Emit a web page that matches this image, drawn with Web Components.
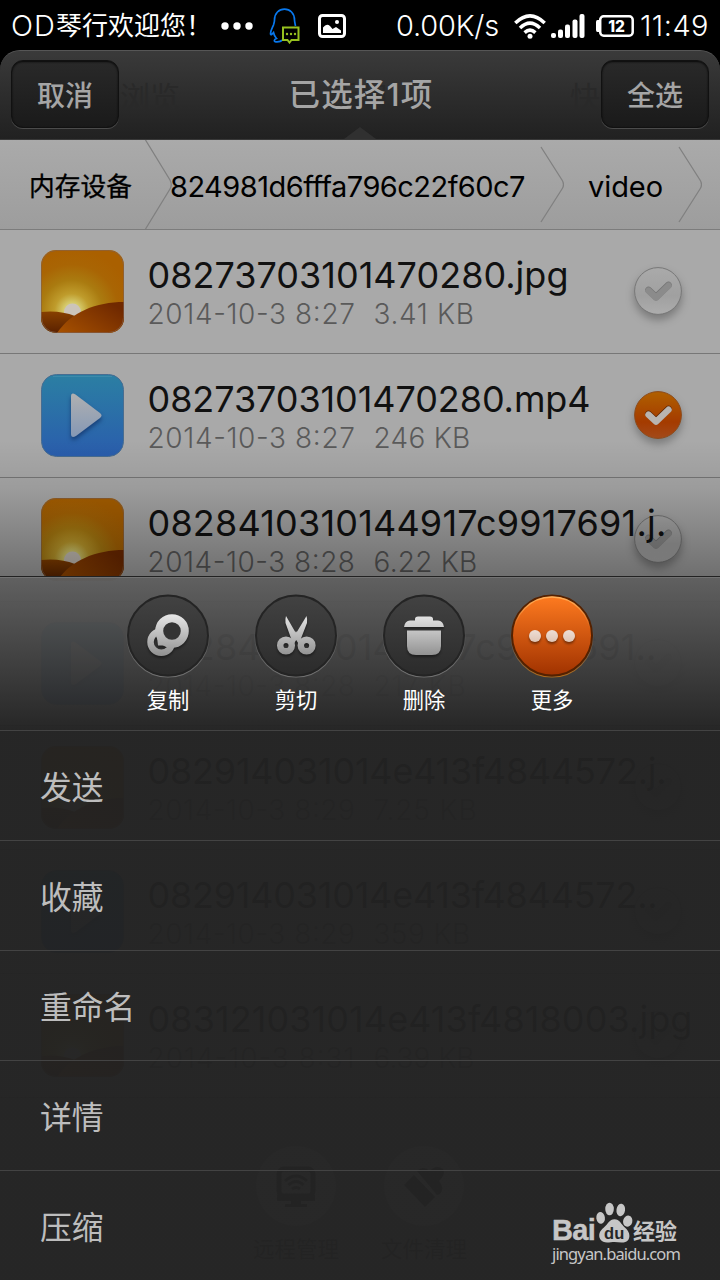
<!DOCTYPE html>
<html lang="zh-CN">
<head>
<meta charset="utf-8">
<title>文件管理</title>
<style>
   html, body { margin: 0; background: #000; }
   body {
      width: 720px;
      height: 1280px;
      overflow: hidden;
      font-family: Inter, "Noto Sans CJK SC", sans-serif;
   }
</style>
</head>
<body>
<file-manager></file-manager>

<script>
const define = (name, html, setup) => {
   const tmpl = document.createElement("template");
   tmpl.innerHTML = html.trim();
   customElements.define(name, class extends HTMLElement {
      constructor() {
         super();
         this.attachShadow({ mode: "open" });
      }
      connectedCallback() {
         if (this.shadowRoot.childNodes.length) return;
         this.shadowRoot.appendChild(tmpl.content.cloneNode(true));
         if (setup) setup(this, this.shadowRoot);
      }
   });
};

// spreads its text to the given width with letter-spacing
define("fit-text", `
   <style>
      :host { display: inline-block; white-space: nowrap; }
   </style>
   <span><slot></slot></span>
`, (el, root) => {
   const width = parseFloat(el.getAttribute("width"));
   const natural = root.querySelector("span").getBoundingClientRect().width;
   const count = [...el.textContent].length;
   if (width && natural) el.style.letterSpacing = `${(width - natural) / count}px`;
});

define("status-bar", `
   <style>
      :host {
         display: flex;
         align-items: center;
         box-sizing: border-box;
         height: 50px;
         padding: 2px 11px 0 11px;
         background: #000;
         color: #fff;
         font-size: 29px;
         font-weight: 300;
         line-height: 48px;
         white-space: nowrap;
      }
      .cjk { font-size: 26px; font-weight: 400; }
      svg { flex: none; display: block; }
      .push { margin-left: auto; }
   </style>
   <fit-text width="45">OD</fit-text><fit-text class="cjk" width="156">琴行欢迎您！</fit-text>
   <svg width="32" height="8" viewBox="0 0 32 8" style="margin-left:9px" fill="#fff">
      <circle cx="4" cy="4" r="3.7"/><circle cx="16" cy="4" r="3.7"/><circle cx="28" cy="4" r="3.7"/>
   </svg>
   <svg width="32" height="36" viewBox="0 0 32 36" style="margin-left:16px" fill="none" stroke-width="1.7">
      <path stroke="#0878ee" d="M26.500 18C26 15.500 25.600 14 25.500 12C25.500 5 21 1.200 15.500 1.200S5.500 5 5.500 12C5.500 14 5 15 4.500 17C3.200 20 1.200 23 1.500 26C2 27.500 3.200 26 4.500 24.500C5 27 6 29 7.500 30.500C5 31.500 4.500 33.500 7 33.800C10 34 12 33.500 13 32"/>
      <path stroke="#97c11f" stroke-width="2" d="M14 19.500h15.500v12.500h-7l-2 2.500-2-2.500h-4.500z"/>
      <g fill="#97c11f"><circle cx="18" cy="26" r="1.200"/><circle cx="22" cy="26" r="1.200"/><circle cx="26" cy="26" r="1.200"/></g>
   </svg>
   <svg width="28" height="24" viewBox="0 0 28 24" style="margin-left:17px">
      <rect x="1.500" y="1.500" width="25" height="21" rx="3" fill="none" stroke="#fff" stroke-width="3"/>
      <path fill="#fff" d="M5 19v-5.500q3.500-4.500 7-1.500l2.500 3 3.500-2 5 3.500v2.500z"/><circle cx="19" cy="8" r="2" fill="#fff"/>
   </svg>
   <fit-text class="push" width="103">0.00K/s</fit-text>
   <svg width="32" height="25" viewBox="0 0 32 25" style="margin-left:15px" fill="none" stroke="#fff" stroke-width="3.500">
      <path d="M1.300 9Q16-5.200 30.700 9M6 14Q16 4.200 26 14M10.600 18.600Q16 13.600 21.400 18.600"/><circle cx="16" cy="22.300" r="2.500" fill="#fff" stroke="none"/>
   </svg>
   <svg width="34" height="24" viewBox="0 0 34 24" style="margin-left:5px" fill="#fff">
      <rect x="0" y="19" width="5" height="5" rx="2"/><rect x="7" y="15.500" width="5" height="8.500" rx="2"/><rect x="14" y="10.500" width="5" height="13.500" rx="2"/><rect x="21.500" y="5.500" width="5" height="18.500" rx="2"/><rect x="28.500" y="0" width="5" height="24" rx="2"/>
   </svg>
   <svg width="38" height="22" viewBox="0 0 38 22" style="margin-left:11px">
      <path fill="#fff" d="M4 5H1.500Q0 5 0 7v8q0 2 1.500 2H4z"/>
      <rect x="4.200" y="1.300" width="32.500" height="19.400" rx="3.500" fill="none" stroke="#fff" stroke-width="2.500"/>
      <text x="20.500" y="16.500" text-anchor="middle" font-size="15.500" font-weight="800" fill="#fff" font-family="Inter">12</text>
   </svg>
   <fit-text width="69" style="margin-left:6px">11:49</fit-text>
`);

define("bar-button", `
   <style>
      :host {
         display: flex;
         align-items: center;
         justify-content: center;
         box-sizing: border-box;
         width: 108px;
         height: 68px;
         border: 1px solid #111;
         border-radius: 12px;
         background: linear-gradient(#292929, #1a1a1a);
         box-shadow: inset 0 1px 2px #090909, 0 1px 0 #4b4b4b;
         color: #a5a5a5;
         font-size: 28px;
         font-weight: 500;
      }
   </style>
   <slot></slot>
`);

define("select-header", `
   <style>
      :host {
         display: flex;
         align-items: flex-start;
         justify-content: space-between;
         position: relative;
         box-sizing: border-box;
         height: 90px;
         padding: 9px 11px 0;
         border-top: 1px solid #565656;
         border-bottom: 1px solid #383838;
         border-radius: 20px 20px 0 0;
         background: linear-gradient(#3a3a3a, #2d2d2d 50%, #212121);
         overflow: hidden;
      }
      .title { color: #a5a5a5; font-size: 31.500px; font-weight: 500; line-height: 69px; }
      bar-button { z-index: 1; }
      /* tabs of the page under the header */
      .tabs {
         position: absolute;
         inset: 0;
         display: grid;
         grid-template-columns: repeat(3, 1fr);
         justify-items: center;
         line-height: 92px;
         color: #292929;
         font-size: 30px;
      }
      .notch {
         position: absolute;
         left: 344px;
         bottom: 0;
         border: 16px solid transparent;
         border-top: 0;
         border-bottom: 12px solid #303030;
      }
      fit-text { position: relative; left: 1px; }
   </style>
   <div class="tabs"><span>分类浏览</span><span>手机</span><span>快盘</span></div>
   <div class="notch"></div>
   <bar-button>取消</bar-button>
   <fit-text class="title" width="145">已选择1项</fit-text>
   <bar-button>全选</bar-button>
`);

define("path-bar", `
   <style>
      :host {
         display: flex;
         box-sizing: border-box;
         height: 90px;
         padding-left: 29px;
         border-bottom: 1px solid #7c7c7c;
         background: linear-gradient(#aaa, #9d9d9d);
         color: #000;
         font-size: 29px;
         line-height: 93px;
         white-space: nowrap;
      }
      svg { flex: none; fill: none; stroke: #808080; stroke-width: 1.3; }
      .root { font-size: 25.7px; font-weight: 400; -webkit-text-stroke: .3px; }
   </style>
   <fit-text class="root" width="103">内存设备</fit-text>
   <svg width="28" height="89" viewBox="0 0 28 89" style="margin-left:12px"><path d="M1.500 0L26 40Q28.500 45 26 49L1.500 89"/></svg>
   <fit-text width="355" style="margin-left:-2px">824981d6fffa796c22f60c7</fit-text>
   <svg width="24" height="89" viewBox="0 0 24 89" style="margin-left:15px"><path d="M1 7L22 40Q25 44.500 22 49L1 82"/></svg>
   <fit-text width="75" style="margin-left:24px">video</fit-text>
   <svg width="24" height="89" viewBox="0 0 24 89" style="margin-left:15px"><path d="M1 7L22 40Q25 44.500 22 49L1 82"/></svg>
`);

const imageIcon = `
   <svg width="83" height="83" viewBox="0 0 83 83">
      <defs>
         <radialGradient id="sun" gradientUnits="userSpaceOnUse" cx="31" cy="61" r="62">
            <stop offset="0" stop-color="#ddd7bf"/><stop offset=".14" stop-color="#d4c868"/><stop offset=".28" stop-color="#bf9c2c"/>
            <stop offset=".5" stop-color="#aa7b10"/><stop offset=".75" stop-color="#a96504"/><stop offset="1" stop-color="#aa6000"/>
         </radialGradient>
         <linearGradient id="near" x1="0" y1="1" x2="1" y2=".3"><stop offset="0" stop-color="#a85200"/><stop offset="1" stop-color="#702900"/></linearGradient>
         <linearGradient id="far" x1="0" y1="0" x2="0" y2="1"><stop offset="0" stop-color="#874000"/><stop offset="1" stop-color="#5a2100"/></linearGradient>
         <clipPath id="tile"><rect width="83" height="83" rx="15"/></clipPath>
      </defs>
      <g clip-path="url(#tile)">
         <rect width="83" height="83" fill="url(#sun)"/>
         <circle cx="31.500" cy="62" r="8.500" fill="#cbc4ba"/>
         <path fill="url(#far)" d="M0 62Q19 60 34 66V83H0z"/>
         <path fill="url(#near)" d="M16 83C30 62 55 52 83 52V83z"/>
      </g>
      <rect x=".5" y=".5" width="82" height="82" rx="15" fill="none" stroke="#806050" stroke-opacity=".6"/>
   </svg>`;

const videoIcon = `
   <svg width="83" height="83" viewBox="0 0 83 83">
      <defs>
         <linearGradient id="sky" x1="0" y1="0" x2="0" y2="1"><stop offset="0" stop-color="#2b7fa3"/><stop offset="1" stop-color="#2a5dad"/></linearGradient>
         <linearGradient id="play" x1="0" y1="0" x2="0" y2="1"><stop offset="0" stop-color="#afb0b1"/><stop offset="1" stop-color="#8598b5"/></linearGradient>
      </defs>
      <rect x=".5" y=".5" width="82" height="82" rx="15" fill="url(#sky)" stroke="#486d91"/>
      <path d="M12 2.500H71" stroke="#4a91b0" stroke-opacity=".6"/>
      <path style="filter:drop-shadow(0 3px 2px #173f78)" fill="url(#play)" d="M30 22.500Q30 18 34.500 20.500L59 39Q62 41.500 59 44L35 62Q30 64.500 30 60z"/>
   </svg>`;

const checkMark = on => `
   <svg width="48" height="48" viewBox="0 0 48 48">
      <defs>
         <linearGradient id="disc" x1="0" y1="0" x2="0" y2="1">
            ${on ? '<stop offset="0" stop-color="#b06000"/><stop offset=".65" stop-color="#a43b00"/><stop offset="1" stop-color="#a34a1a"/>'
                 : '<stop offset="0" stop-color="#aaa"/><stop offset=".6" stop-color="#a0a0a0"/><stop offset="1" stop-color="#adadad"/>'}
         </linearGradient>
      </defs>
      <circle cx="24" cy="24" r="23.400" fill="url(#disc)" stroke="${on ? "#8c4a1a" : "#777"}"/>
      <path d="M14.500 23L22 30L34.500 18" fill="none" stroke="${on ? "#5c2500" : "#747474"}" stroke-width="6.600" stroke-linecap="round" stroke-linejoin="round"/>
      <path d="M14.500 23.700L22 30.700L34.500 18.700" fill="none" stroke="${on ? "#b9b4b0" : "#8b8b8b"}" stroke-width="6.400" stroke-linecap="round" stroke-linejoin="round"/>
   </svg>`;

define("file-row", `
   <style>
      :host {
         display: flex;
         align-items: center;
         box-sizing: border-box;
         height: 124px;
         padding: 0 38px 0 41px;
         border-bottom: 1px solid #777;
         background: #a9a9a9;
      }
      svg { display: block; overflow: visible; }
      .info {
         display: grid;
         grid-template-columns: 226px 1fr;
         row-gap: 4px;
         flex: 1;
         min-width: 0;
         margin-left: 23.500px;
         position: relative;
         z-index: 1;
         white-space: nowrap;
      }
      .name { grid-column: 1 / 3; height: 40px; color: #111; font-size: 36px; line-height: 40px; }
      .meta { height: 30px; color: #5a5a5a; font-size: 28px; font-weight: 300; line-height: 30px; font-feature-settings: "case"; }
      .check { margin-top: -2px; filter: drop-shadow(0 5px 4px rgba(0, 0, 0, .28)); }
   </style>
   <div class="icon"></div>
   <div class="info">
      <div class="name"></div>
      <div class="meta date"></div>
      <div class="meta size"></div>
   </div>
   <div class="check"></div>
`, (el, root) => {
   const fit = (text, width) => `<fit-text width="${width}">${text}</fit-text>`;
   root.querySelector(".icon").innerHTML = el.getAttribute("kind") == "video" ? videoIcon : imageIcon;
   root.querySelector(".name").innerHTML = fit(el.getAttribute("name"), el.getAttribute("name-width"));
   root.querySelector(".date").innerHTML = fit(el.getAttribute("date"), 208);
   root.querySelector(".size").innerHTML = fit(el.getAttribute("size"), el.getAttribute("size-width"));
   root.querySelector(".check").innerHTML = checkMark(el.hasAttribute("checked"));
});

define("bottom-tools", `
   <style>
      :host {
         display: flex;
         justify-content: center;
         gap: 42px;
         height: 182px;
         padding-top: 47px;
         box-sizing: border-box;
         background: #a5a5a5;
         color: #444;
         font-size: 21.500px;
         line-height: 32px;
      }
      div { display: flex; flex-direction: column; align-items: center; width: 86px; gap: 6px; white-space: nowrap; }
      svg { flex: none; }
   </style>
   <div>
      <svg width="82" height="82" viewBox="0 0 82 82">
         <circle cx="41" cy="41" r="40" fill="#ddd"/>
         <rect x="24" y="24" width="34" height="27" rx="5" fill="none" stroke="#444" stroke-width="5"/>
         <path d="M22 50h38v6H22zM36 56h10v4H36zM30 59h22v3H30z" fill="#444"/>
         <path d="M30 36Q41 26 52 36M33.500 40Q41 33 48.500 40M37 44Q41 41 45 44" fill="none" stroke="#444" stroke-width="3"/>
      </svg>
      <span>远程管理</span>
   </div>
   <div>
      <svg width="82" height="82" viewBox="0 0 82 82">
         <circle cx="41" cy="41" r="40" fill="#ddd"/>
         <path fill="#444" d="M21 40L31 30L52 52L42 62zM34 26Q40 20 47 26Q53 19 60 24Q63 29 56 36Q62 43 57 49L54 50z"/>
      </svg>
      <span>文件清理</span>
   </div>
`);

const toolIcons = {
   copy: `
      <circle cx="34.300" cy="48" r="10.800" fill="none" stroke="url(#metal)" stroke-width="6.500"/>
      <path fill="url(#metal)" d="M30 43L36 38L50 50L42 54L40 51.500H31z"/>
      <circle cx="45" cy="37" r="12.800" fill="#343434" stroke="url(#metal)" stroke-width="8"/>`,
   cut: `
      <path fill="url(#metal)" d="M31 22L42 41L37 47L30.500 29Q30 25 31 22zM51.500 22L40 41L45 47L52 29Q52.500 25 51.500 22z"/>
      <g fill="none" stroke="url(#metal)" stroke-width="6.500"><circle cx="31" cy="51.500" r="5.800"/><circle cx="51.600" cy="51.500" r="5.800"/></g>
      <path fill="url(#metal)" d="M36 46L41 37L46.500 46L45 52L41.200 46L37.500 52z"/>`,
   remove: `
      <path fill="url(#metal)" d="M21 33Q22 26.500 27 26.500H32V25Q32 22.500 35 22.500H47Q50 22.500 50 25V26.500H55Q60 26.500 61 33z"/>
      <path fill="url(#metal)" d="M24 36.500H58V52Q58 61 49 61H33Q24 61 24 52z"/>`,
   more: `
      <g fill="url(#metal)"><circle cx="24" cy="42" r="6"/><circle cx="41" cy="42" r="6"/><circle cx="58" cy="42" r="6"/></g>`
};

define("tool-button", `
   <style>
      :host {
         display: flex;
         flex-direction: column;
         align-items: center;
         width: 82px;
         color: #fff;
         font-size: 21.300px;
         line-height: 30px;
      }
      svg { display: block; margin-bottom: 7px; overflow: visible; }
      .glyph { filter: drop-shadow(0 2px 1px rgba(0, 0, 0, .4)); }
   </style>
   <svg width="82" height="84" viewBox="0 0 82 84">
      <defs>
         <linearGradient id="well" x1="0" y1="0" x2="0" y2="1"><stop class="c1" offset="0"/><stop class="c2" offset="1"/></linearGradient>
         <linearGradient id="metal" gradientUnits="userSpaceOnUse" x1="0" y1="20" x2="0" y2="62"><stop class="m1" offset="0"/><stop class="m2" offset="1"/></linearGradient>
         <linearGradient id="rim" x1="0" y1="0" x2="0" y2="1"><stop offset=".4" stop-color="#888" stop-opacity="0"/><stop class="r2" offset="1"/></linearGradient>
         <linearGradient id="shine" x1="0" y1="0" x2="0" y2="1"><stop offset="0" stop-color="#ffae58"/><stop offset=".4" stop-color="#ffb15c" stop-opacity="0"/></linearGradient>
      </defs>
      <circle cx="41" cy="42" r="41" fill="none" stroke="url(#rim)" stroke-width="1.200"/>
      <circle class="disc" cx="41" cy="41.500" r="40" fill="url(#well)" stroke-width="2"/>
      <circle class="shine" cx="41" cy="41.500" r="38.500" fill="none" stroke="url(#shine)" stroke-width="1.500"/>
      <g class="glyph"></g>
   </svg>
   <slot></slot>
`, (el, root) => {
   const active = el.hasAttribute("active");
   const paint = (sel, color) => root.querySelector(sel).setAttribute("stop-color", color);
   paint(".c1", active ? "#ff7b20" : "#424242");
   paint(".c2", active ? "#a03200" : "#2b2b2b");
   paint(".m1", active ? "#fff" : "#e8e8e8");
   paint(".m2", active ? "#d0a890" : "#909090");
   paint(".r2", active ? "#b06a18" : "#707070");
   if (!active) root.querySelector(".shine").remove();
   root.querySelector(".disc").setAttribute("stroke", active ? "#542100" : "#242424");
   root.querySelector(".glyph").innerHTML = toolIcons[el.getAttribute("icon")];
});

define("menu-item", `
   <style>
      :host {
         display: block;
         box-sizing: border-box;
         height: 110px;
         padding-left: 40px;
         border-top: 1px solid #434343;
         color: #bdbdbd;
         font-size: 31.800px;
         line-height: 113px;
      }
   </style>
   <slot></slot>
`);

define("action-sheet", `
   <style>
      :host {
         display: block;
         height: 704px;
         box-sizing: border-box;
         border-top: 1px solid #222;
         background: linear-gradient(rgba(94, 94, 94, .97), rgba(34, 34, 34, .97) 153px);
         box-shadow: inset 0 1px 0 #727272;
      }
      .tools { display: flex; justify-content: center; gap: 46px; height: 153px; padding-top: 17px; box-sizing: border-box; }
   </style>
   <div class="tools"><slot name="tool"></slot></div>
   <slot></slot>
`);

define("site-mark", `
   <style>
      :host { display: block; color: #c6c6c6; white-space: nowrap; }
      .brand { display: flex; align-items: flex-end; height: 41px; }
      .bai { font: bold 29px/24px "Liberation Sans", sans-serif; -webkit-text-stroke: .4px; }
      .cn { font-size: 22px; font-weight: 700; line-height: 21px; }
      .url { display: block; height: 22px; font: 16.500px/22px "Noto Sans", sans-serif; }
      svg { margin: 0 2px 0 3px; overflow: visible; }
      .bai, .cn { padding-bottom: 1px; }
   </style>
   <div class="brand">
      <fit-text class="bai" width="43">Bai</fit-text>
      <svg width="33" height="41" viewBox="205 36 98 124" fill="currentColor">
         <ellipse cx="212" cy="84" rx="13" ry="18" transform="rotate(-8 212 84)"/><ellipse cx="239" cy="57" rx="13" ry="19"/>
         <ellipse cx="273" cy="60" rx="13" ry="19" transform="rotate(8 273 60)"/><ellipse cx="294" cy="94" rx="14" ry="17" transform="rotate(15 294 94)"/>
         <path d="M254 88C238 88 235 102 222 113C209 123 204 136 211 149C220 164 240 157 254 157C268 157 286 163 296 150C303 139 298 124 286 114C273 102 270 88 254 88z"/>
         <text x="253" y="148" text-anchor="middle" font-family="Liberation Sans" font-weight="bold" font-size="50" fill="#262626">du</text>
      </svg>
      <fit-text class="cn" width="44">经验</fit-text>
   </div>
   <fit-text class="url" width="128">jingyan.baidu.com</fit-text>
`);

define("file-manager", `
   <style>
      :host { display: block; position: relative; height: 1280px; overflow: hidden; }
      .fade {
         position: absolute;
         inset: 440px 0 704px;
         height: 136px;
         background: linear-gradient(rgba(0, 0, 0, 0), rgba(0, 0, 0, .08) 35%, rgba(0, 0, 0, .34));
         z-index: 2;
      }
      action-sheet { position: absolute; inset: 576px 0 0; z-index: 3; }
      site-mark { position: absolute; left: 552px; top: 1202px; z-index: 4; }
   </style>
   <status-bar></status-bar>
   <select-header></select-header>
   <path-bar></path-bar>
   <main>
      <file-row name="08273703101470280.jpg" name-width="421" date="2014-10-3 8:27" size="3.41 KB" size-width="101"></file-row>
      <file-row kind="video" checked name="08273703101470280.mp4" name-width="443" date="2014-10-3 8:27" size="246 KB" size-width="97"></file-row>
      <file-row name="0828410310144917c9917691.j." name-width="519" date="2014-10-3 8:28" size="6.22 KB" size-width="104"></file-row>
      <file-row kind="video" name="0828410310144917c9917691.." name-width="509" date="2014-10-3 8:28" size="217 KB" size-width="93"></file-row>
      <file-row name="082914031014e413f4844572.j." name-width="519" date="2014-10-3 8:29" size="7.25 KB" size-width="104"></file-row>
      <file-row kind="video" name="082914031014e413f4844572.." name-width="510" date="2014-10-3 8:29" size="359 KB" size-width="97"></file-row>
      <file-row name="083121031014e413f4818003.jpg" name-width="545" date="2014-10-3 8:31" size="6.39 KB" size-width="101"></file-row>
   </main>
   <bottom-tools></bottom-tools>
   <div class="fade"></div>
   <action-sheet>
      <tool-button slot="tool" icon="copy">复制</tool-button>
      <tool-button slot="tool" icon="cut">剪切</tool-button>
      <tool-button slot="tool" icon="remove">删除</tool-button>
      <tool-button slot="tool" icon="more" active>更多</tool-button>
      <menu-item>发送</menu-item>
      <menu-item>收藏</menu-item>
      <menu-item>重命名</menu-item>
      <menu-item>详情</menu-item>
      <menu-item>压缩</menu-item>
   </action-sheet>
   <site-mark></site-mark>
`);
</script>
</body>
</html>
